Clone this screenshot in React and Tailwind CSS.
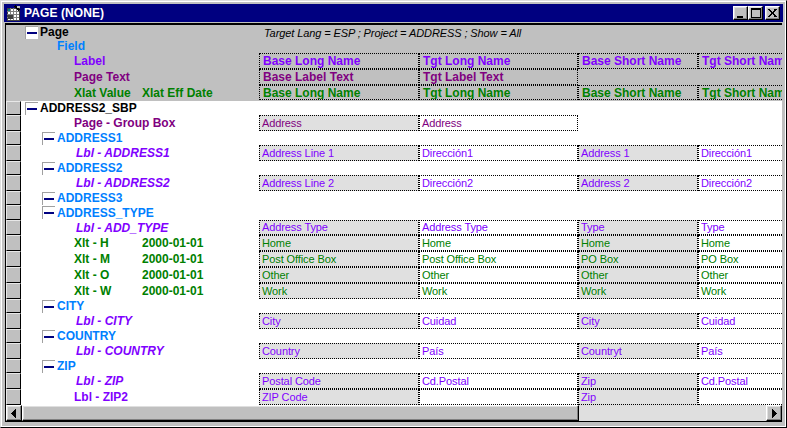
const colors = {
  black: 'text-black',
  blue: 'text-[#0080ff]',
  violet: 'text-[#8000ff]',
  purple: 'text-[#800080]',
  green: 'text-[#008000]',
};

const widths = ['w-[160px]', 'w-[159px]', 'w-[120px]', 'w-[120px]'];
const fills = ['bg-[#e0e0e0]', 'bg-white', 'bg-[#e0e0e0]', 'bg-white'];

const rows = [
  { h: 'h-[14px]', level: 1, label: 'ADDRESS2_SBP', color: 'black' },
  { h: 'h-[16px]', label: 'Page - Group Box', color: 'purple', cells: ['Address', 'Address'] },
  { h: 'h-[14px]', level: 2, label: 'ADDRESS1', color: 'blue' },
  { h: 'h-[16px]', label: 'Lbl - ADDRESS1', color: 'violet', italic: true, cells: ['Address Line 1', 'Dirección1', 'Address 1', 'Dirección1'] },
  { h: 'h-[14px]', level: 2, label: 'ADDRESS2', color: 'blue' },
  { h: 'h-[16px]', label: 'Lbl - ADDRESS2', color: 'violet', italic: true, cells: ['Address Line 2', 'Dirección2', 'Address 2', 'Dirección2'] },
  { h: 'h-[14px]', level: 2, label: 'ADDRESS3', color: 'blue' },
  { h: 'h-[15px]', level: 2, label: 'ADDRESS_TYPE', color: 'blue' },
  { h: 'h-[15px]', label: 'Lbl - ADD_TYPE', color: 'violet', italic: true, cells: ['Address Type', 'Address Type', 'Type', 'Type'] },
  { h: 'h-[16px]', label: 'Xlt - H', date: '2000-01-01', color: 'green', cells: ['Home', 'Home', 'Home', 'Home'] },
  { h: 'h-[16px]', label: 'Xlt - M', date: '2000-01-01', color: 'green', cells: ['Post Office Box', 'Post Office Box', 'PO Box', 'PO Box'] },
  { h: 'h-[16px]', label: 'Xlt - O', date: '2000-01-01', color: 'green', cells: ['Other', 'Other', 'Other', 'Other'] },
  { h: 'h-[16px]', label: 'Xlt - W', date: '2000-01-01', color: 'green', cells: ['Work', 'Work', 'Work', 'Work'] },
  { h: 'h-[14px]', level: 2, label: 'CITY', color: 'blue' },
  { h: 'h-[16px]', label: 'Lbl - CITY', color: 'violet', italic: true, cells: ['City', 'Cuidad', 'City', 'Cuidad'] },
  { h: 'h-[14px]', level: 2, label: 'COUNTRY', color: 'blue' },
  { h: 'h-[16px]', label: 'Lbl - COUNTRY', color: 'violet', italic: true, cells: ['Country', 'País', 'Countryt', 'País'] },
  { h: 'h-[14px]', level: 2, label: 'ZIP', color: 'blue' },
  { h: 'h-[16px]', label: 'Lbl - ZIP', color: 'violet', italic: true, cells: ['Postal Code', 'Cd.Postal', 'Zip', 'Cd.Postal'] },
  { h: 'h-[16px]', label: 'Lbl - ZIP2', color: 'violet', cells: ['ZIP Code', '', 'Zip', ''] },
];

const bevel = 'border border-t-white border-l-white border-r-black border-b-black shadow-[inset_-1px_-1px_0_#808080,inset_1px_1px_0_#dfdfdf] bg-[#c0c0c0]';

function Expander({ white }) {
  return (
    <span className={`flex h-[13px] w-[13px] shrink-0 items-center justify-center self-start mt-[1px] border-l border-t border-[#a0a0a0] ${white ? 'bg-white' : ''}`}>
      <span className="h-[2px] w-[10px] bg-[#000080]" />
    </span>
  );
}

function HeaderCell({ i, color, text }) {
  return (
    <div className={`${widths[i]} shrink-0 h-full flex items-center pl-[3px] border border-dotted border-black overflow-hidden whitespace-nowrap font-bold text-[12px] ${colors[color]}`}>
      {text}
    </div>
  );
}

function HeaderRow({ h, children, cells, color }) {
  return (
    <div className={`flex ${h}`}>
      <div className="w-[253px] shrink-0 flex items-center font-bold text-[12px]">{children}</div>
      {cells && cells.map((c, i) => <HeaderCell key={i} i={i} color={color} text={c} />)}
    </div>
  );
}

function TreeLabel({ row }) {
  if (row.level) {
    return (
      <div className={`flex items-center h-full gap-[2px] ${row.level === 1 ? 'pl-[4px]' : 'pl-[21px]'}`}>
        <Expander />
        <span className={colors[row.color]}>{row.label}</span>
      </div>
    );
  }
  return (
    <div className={`flex items-center h-full ${row.italic ? 'pl-[55px] italic' : 'pl-[53px]'} ${colors[row.color]}`}>
      {row.date ? <span className="w-[68px]">{row.label}</span> : row.label}
      {row.date && <span>{row.date}</span>}
    </div>
  );
}

function Row({ row }) {
  return (
    <div className={`flex ${row.h}`}>
      <div className="w-[15px] shrink-0 bg-[#c0c0c0] border-t border-l border-t-[#e8e8e8] border-l-[#e8e8e8] border-r border-r-black border-b border-b-black" />
      <div className="w-[238px] shrink-0 whitespace-nowrap font-bold text-[12px]">
        <TreeLabel row={row} />
      </div>
      {row.cells && row.cells.map((c, i) => (
        <div
          key={i}
          className={`${widths[i]} ${fills[i]} shrink-0 h-full flex items-center pl-[2px] border border-dotted border-black overflow-hidden whitespace-nowrap text-[11px] tracking-[-0.1px] ${colors[row.color]}`}
        >
          {c}
        </div>
      ))}
    </div>
  );
}

function AppIcon() {
  return (
    <svg width="16" height="16" viewBox="0 0 16 16" shapeRendering="crispEdges" className="shrink-0">
      <rect x="1" y="3" width="12" height="12" fill="#fff" stroke="#404040" />
      <path d="M1 6h12M1 9h12M1 12h12M4 3v12M7 3v12M10 3v12" stroke="#808080" />
      <rect x="2" y="4" width="2" height="2" fill="#008080" />
      <rect x="2" y="10" width="5" height="4" fill="#404040" />
      <path d="M9 0l5 5-2 1-4-4z" fill="#000" />
      <rect x="11" y="1" width="3" height="2" fill="#c0c0c0" />
    </svg>
  );
}

function TitleButton({ children }) {
  return (
    <div className={`flex h-[14px] w-[15px] items-center justify-center ${bevel}`}>{children}</div>
  );
}

function ScrollArrow({ dir }) {
  return (
    <svg width="6" height="9" viewBox="0 0 6 9" shapeRendering="crispEdges">
      <polygon points={dir === 'left' ? '5,0 5,9 0,4.5' : '1,0 1,9 6,4.5'} fill="#000" />
    </svg>
  );
}

export default function App() {
  return (
    <div className="w-[787px] h-[428px] overflow-hidden bg-[#c0c0c0] font-['Liberation_Sans',sans-serif] border-t border-l border-t-[#dfdfdf] border-l-[#dfdfdf] border-r border-b border-r-black border-b-black">
      <div className="w-full h-full border border-white pt-[2px] pl-[2px] pr-[2px] pb-[4px] flex flex-col">
        {/* title bar */}
        <div className="h-[18px] shrink-0 bg-[#000080] flex items-center pl-[2px] pr-[3px]">
          <AppIcon />
          <span className="ml-[2px] text-white font-bold text-[12px] tracking-[0.1px]">PAGE (NONE)</span>
          <div className="ml-auto flex items-center">
            <TitleButton>
              <span className="block h-[2px] w-[6px] bg-black mt-[7px] mr-[2px]" />
            </TitleButton>
            <TitleButton>
              <span className="block h-[10px] w-[10px] border border-t-2 border-black" />
            </TitleButton>
            <div className="ml-[2px]">
              <TitleButton>
                <svg width="9" height="8" viewBox="0 0 9 8" shapeRendering="crispEdges">
                  <path d="M1 0l7 8M8 0l-7 8" stroke="#000" strokeWidth="1.6" />
                </svg>
              </TitleButton>
            </div>
          </div>
        </div>

        {/* client area */}
        <div className="mt-[1px] ml-[1px] flex-1 min-h-0 flex flex-col border-t-2 border-l border-black overflow-hidden w-[777px]">
          <div className="h-[76px] shrink-0 bg-[#c0c0c0] overflow-hidden">
            <HeaderRow h="h-[13px]">
              <div className="flex items-center h-full gap-[2px] pl-[19px]">
                <Expander white />
                <span className="text-black">Page</span>
              </div>
              <span className="absolute left-[264px] top-[25px] italic font-normal text-[11px] tracking-[-0.1px] text-black whitespace-nowrap">
                Target Lang = ESP ; Project = ADDRESS ; Show = All
              </span>
            </HeaderRow>
            <HeaderRow h="h-[15px]">
              <span className="pl-[51px] text-[#0080ff]">Field</span>
            </HeaderRow>
            <HeaderRow h="h-[16px]" color="violet" cells={['Base Long Name', 'Tgt Long Name', 'Base Short Name', 'Tgt Short Name']}>
              <span className="pl-[68px] text-[#8000ff]">Label</span>
            </HeaderRow>
            <HeaderRow h="h-[16px]" color="purple" cells={['Base Label Text', 'Tgt Label Text']}>
              <span className="pl-[68px] text-[#800080]">Page Text</span>
            </HeaderRow>
            <HeaderRow h="h-[15px]" color="green" cells={['Base Long Name', 'Tgt Long Name', 'Base Short Name', 'Tgt Short Name']}>
              <span className="pl-[68px] w-[136px] text-[#008000]">Xlat Value</span>
              <span className="text-[#008000]">Xlat Eff Date</span>
            </HeaderRow>
          </div>

          <div className="flex-1 min-h-0 bg-white overflow-hidden">
            {rows.map((r, i) => <Row key={i} row={r} />)}
          </div>

          {/* horizontal scrollbar */}
          <div className="h-[17px] shrink-0 flex bg-[#dfdfdf] border-b border-black">
            <div className={`w-[16px] shrink-0 flex items-center justify-center ${bevel}`}>
              <ScrollArrow dir="left" />
            </div>
            <div className={`w-[557px] shrink-0 ${bevel}`} />
            <div className="flex-1" />
            <div className={`w-[16px] shrink-0 flex items-center justify-center ${bevel}`}>
              <ScrollArrow dir="right" />
            </div>
          </div>
        </div>
      </div>
    </div>
  );
}
